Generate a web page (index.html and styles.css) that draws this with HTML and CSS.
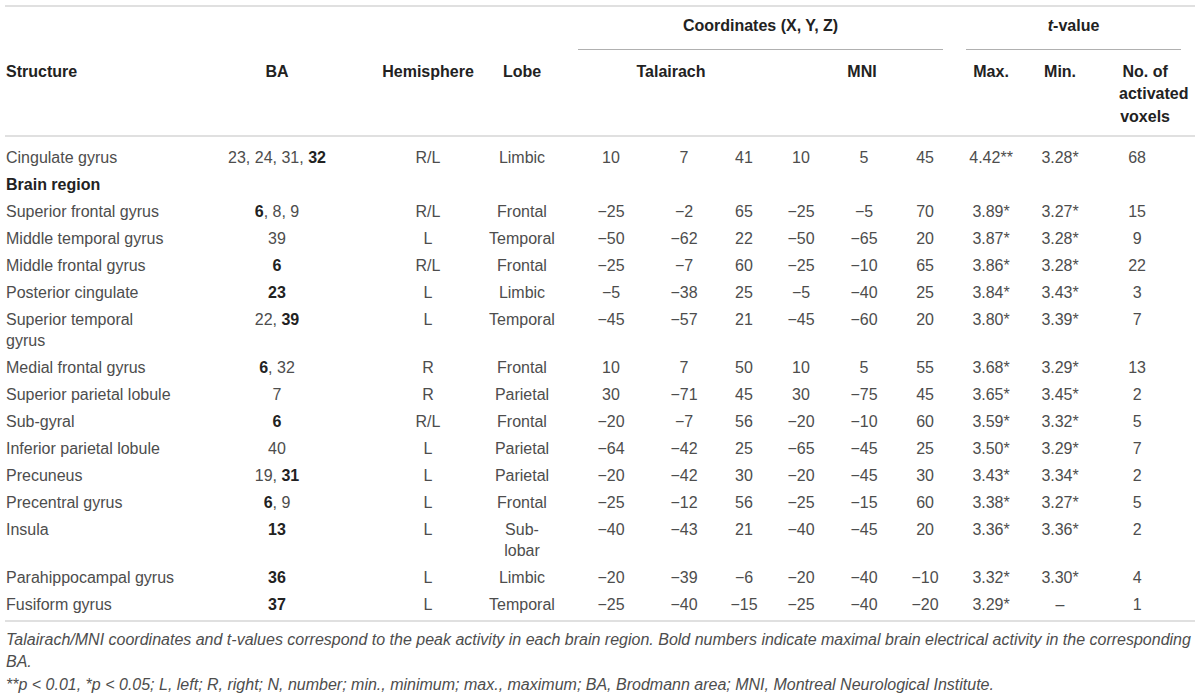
FILE: index.html
```html
<!DOCTYPE html>
<html lang="en">
<head>
<meta charset="utf-8">
<title>Table</title>
<link rel="stylesheet" href="styles.css">
</head>
<body>
<div class="wrap">
<table class="tbl">
  <colgroup>
    <col class="c-struct"><col class="c-ba"><col class="c-hem"><col class="c-lobe">
    <col class="c-tx"><col class="c-ty"><col class="c-tz">
    <col class="c-mx"><col class="c-my"><col class="c-mz">
    <col class="c-max"><col class="c-min"><col class="c-no">
  </colgroup>
  <thead>
    <tr class="h1">
      <th></th><th></th><th></th><th></th>
      <th colspan="6"><div class="grp grp-coord">Coordinates (X, Y, Z)</div></th>
      <th colspan="3"><div class="grp grp-t"><i>t</i>-value</div></th>
    </tr>
    <tr class="h2">
      <th class="left">Structure</th>
      <th>BA</th>
      <th>Hemisphere</th>
      <th>Lobe</th>
      <th colspan="3">Talairach</th>
      <th colspan="3">MNI</th>
      <th>Max.</th>
      <th>Min.</th>
      <th class="novox">No. of activated voxels</th>
    </tr>
  </thead>
  <tbody>
    <tr class="first"><td class="left">Cingulate gyrus</td><td>23, 24, 31, <b>32</b></td><td>R/L</td><td class="lobe">Limbic</td><td>10</td><td>7</td><td>41</td><td>10</td><td>5</td><td>45</td><td>4.42**</td><td>3.28*</td><td class="no">68</td></tr>
    <tr><td class="left"><b>Brain region</b></td><td></td><td></td><td class="lobe"></td><td></td><td></td><td></td><td></td><td></td><td></td><td></td><td></td><td class="no"></td></tr>
    <tr><td class="left">Superior frontal gyrus</td><td><b>6</b>, 8, 9</td><td>R/L</td><td class="lobe">Frontal</td><td>−25</td><td>−2</td><td>65</td><td>−25</td><td>−5</td><td>70</td><td>3.89*</td><td>3.27*</td><td class="no">15</td></tr>
    <tr><td class="left">Middle temporal gyrus</td><td>39</td><td>L</td><td class="lobe">Temporal</td><td>−50</td><td>−62</td><td>22</td><td>−50</td><td>−65</td><td>20</td><td>3.87*</td><td>3.28*</td><td class="no">9</td></tr>
    <tr><td class="left">Middle frontal gyrus</td><td><b>6</b></td><td>R/L</td><td class="lobe">Frontal</td><td>−25</td><td>−7</td><td>60</td><td>−25</td><td>−10</td><td>65</td><td>3.86*</td><td>3.28*</td><td class="no">22</td></tr>
    <tr><td class="left">Posterior cingulate</td><td><b>23</b></td><td>L</td><td class="lobe">Limbic</td><td>−5</td><td>−38</td><td>25</td><td>−5</td><td>−40</td><td>25</td><td>3.84*</td><td>3.43*</td><td class="no">3</td></tr>
    <tr><td class="left">Superior temporal gyrus</td><td>22, <b>39</b></td><td>L</td><td class="lobe">Temporal</td><td>−45</td><td>−57</td><td>21</td><td>−45</td><td>−60</td><td>20</td><td>3.80*</td><td>3.39*</td><td class="no">7</td></tr>
    <tr><td class="left">Medial frontal gyrus</td><td><b>6</b>, 32</td><td>R</td><td class="lobe">Frontal</td><td>10</td><td>7</td><td>50</td><td>10</td><td>5</td><td>55</td><td>3.68*</td><td>3.29*</td><td class="no">13</td></tr>
    <tr><td class="left">Superior parietal lobule</td><td>7</td><td>R</td><td class="lobe">Parietal</td><td>30</td><td>−71</td><td>45</td><td>30</td><td>−75</td><td>45</td><td>3.65*</td><td>3.45*</td><td class="no">2</td></tr>
    <tr><td class="left">Sub-gyral</td><td><b>6</b></td><td>R/L</td><td class="lobe">Frontal</td><td>−20</td><td>−7</td><td>56</td><td>−20</td><td>−10</td><td>60</td><td>3.59*</td><td>3.32*</td><td class="no">5</td></tr>
    <tr><td class="left">Inferior parietal lobule</td><td>40</td><td>L</td><td class="lobe">Parietal</td><td>−64</td><td>−42</td><td>25</td><td>−65</td><td>−45</td><td>25</td><td>3.50*</td><td>3.29*</td><td class="no">7</td></tr>
    <tr><td class="left">Precuneus</td><td>19, <b>31</b></td><td>L</td><td class="lobe">Parietal</td><td>−20</td><td>−42</td><td>30</td><td>−20</td><td>−45</td><td>30</td><td>3.43*</td><td>3.34*</td><td class="no">2</td></tr>
    <tr><td class="left">Precentral gyrus</td><td><b>6</b>, 9</td><td>L</td><td class="lobe">Frontal</td><td>−25</td><td>−12</td><td>56</td><td>−25</td><td>−15</td><td>60</td><td>3.38*</td><td>3.27*</td><td class="no">5</td></tr>
    <tr><td class="left">Insula</td><td><b>13</b></td><td>L</td><td class="lobe">Sub-lobar</td><td>−40</td><td>−43</td><td>21</td><td>−40</td><td>−45</td><td>20</td><td>3.36*</td><td>3.36*</td><td class="no">2</td></tr>
    <tr><td class="left nowrap">Parahippocampal gyrus</td><td><b>36</b></td><td>L</td><td class="lobe">Limbic</td><td>−20</td><td>−39</td><td>−6</td><td>−20</td><td>−40</td><td>−10</td><td>3.32*</td><td>3.30*</td><td class="no">4</td></tr>
    <tr class="last"><td class="left">Fusiform gyrus</td><td><b>37</b></td><td>L</td><td class="lobe">Temporal</td><td>−25</td><td>−40</td><td>−15</td><td>−25</td><td>−40</td><td>−20</td><td>3.29*</td><td>–</td><td class="no">1</td></tr>
  </tbody>
</table>
<div class="notes">
  <p>Talairach/MNI coordinates and t-values correspond to the peak activity in each brain region. Bold numbers indicate maximal brain electrical activity in the corresponding BA.</p>
  <p>**p &lt; 0.01, *p &lt; 0.05; L, left; R, right; N, number; min., minimum; max., maximum; BA, Brodmann area; MNI, Montreal Neurological Institute.</p>
</div>
</div>
</body>
</html>
```

FILE: styles.css
```css
html, body {
  margin: 0;
  padding: 0;
  background: #ffffff;
}

body {
  font-family: "Liberation Sans", Arial, Helvetica, sans-serif;
  font-size: 16px;
  color: #4d4d4d;
}

.wrap {
  padding: 5px 5px 0 5px;
}

.tbl {
  width: 1190px;
  table-layout: fixed;
  border-collapse: collapse;
  border-top: 2px solid #e0e0e0;
}

.c-struct { width: 176px; }
.c-ba { width: 192px; }
.c-hem { width: 110px; }
.c-lobe { width: 78px; }
.c-tx { width: 100px; }
.c-ty { width: 46px; }
.c-tz { width: 74px; }
.c-mx { width: 40px; }
.c-my { width: 86px; }
.c-mz { width: 36px; }
.c-max { width: 96px; }
.c-min { width: 42px; }
.c-no { width: 114px; }

th, td {
  padding: 0;
  text-align: center;
  vertical-align: top;
  white-space: nowrap;
}

th {
  font-weight: bold;
  color: #222222;
  line-height: 22.5px;
}

td {
  line-height: 21px;
  padding-top: 3px;
  padding-bottom: 3px;
}

.left {
  text-align: left;
  padding-left: 1px;
  padding-right: 9px;
  white-space: normal;
}

.left.nowrap {
  white-space: nowrap;
}

.h1 th {
  padding-top: 8px;
}

.grp {
  padding-bottom: 11px;
  border-bottom: 1px solid #b0b0b0;
}

.grp-coord {
  margin: 0 0 0 17px;
}

.grp-t {
  margin: 0 14px 0 23px;
}

.h2 th {
  padding-top: 11px;
  padding-bottom: 7px;
  border-bottom: 2px solid #e0e0e0;
}

.h2 th.novox {
  padding-left: 38px;
  padding-right: 24px;
  white-space: normal;
}

td b {
  color: #222222;
}

td.lobe {
  padding-left: 4.75px;
  padding-right: 4.75px;
  white-space: normal;
}

td.no {
  padding-right: 2px;
}

tr.first td {
  padding-top: 9.5px;
}

tr.last td {
  padding-bottom: 5px;
}

tbody tr.last {
  border-bottom: 2px solid #e0e0e0;
}

.notes {
  padding: 7px 0 0 1px;
  font-style: italic;
  color: #4d4d4d;
  line-height: 22.5px;
}

.notes p {
  margin: 0;
}
```
